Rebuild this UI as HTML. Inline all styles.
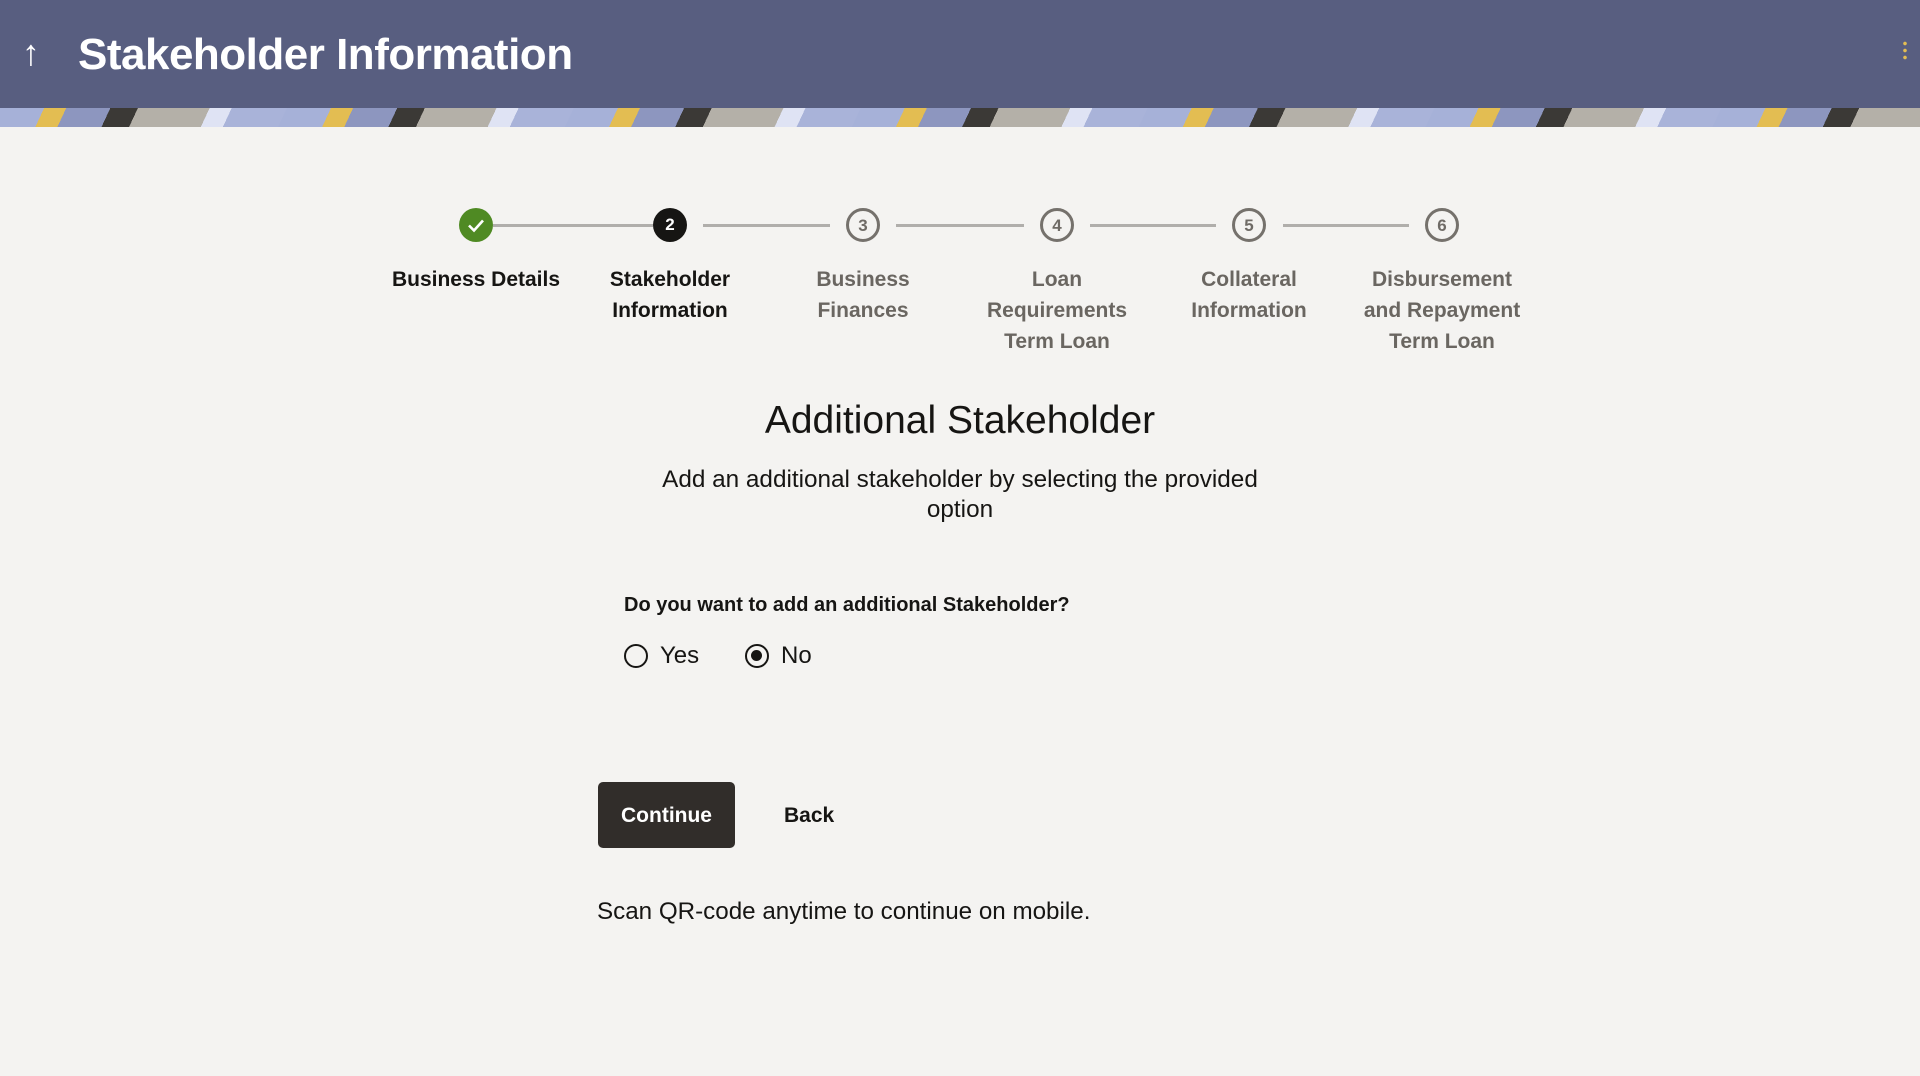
<!DOCTYPE html>
<html><head><meta charset="utf-8"><style>
*{margin:0;padding:0;box-sizing:border-box}
body{width:1920px;height:1076px;background:#f4f3f1;font-family:"Liberation Sans",sans-serif;position:relative;overflow:hidden;color:#161513}
.hdr{position:absolute;left:0;top:0;width:1920px;height:108px;background:#585e80}
.band{position:absolute;left:0;top:108px;width:1920px;height:19px;background:repeating-linear-gradient(115deg,#a6b1d8 0 40px,#e3bd52 40px 60px,#8d96bf 60px 100px,#3b3936 100px 125px,#b4b0a8 125px 190px,#dfe3f4 190px 210px,#a9b3d9 210px 260px)}
.ab{position:absolute;white-space:nowrap}
.title{left:78px;top:30px;font-size:44px;font-weight:bold;color:#fff;letter-spacing:-0.5px}
.line{position:absolute;top:224px;height:3px;background:#b0aeab}
.c{position:absolute;top:208px;width:34px;height:34px;border-radius:50%;text-align:center;line-height:30px;font-size:17px;font-weight:bold}
.c.o{border:3px solid #75716c;color:#6f6b66;background:#f4f3f1}
.lbl{position:absolute;top:264px;width:180px;margin-left:-90px;text-align:center;font-size:21px;font-weight:bold;line-height:31px;color:#6a6661}
</style></head><body>
<div class="hdr"></div>
<div class="band"></div>
<div class="ab" style="left:22px;top:32px;color:#fff;font-size:36px">↑</div>
<div class="ab title">Stakeholder Information</div>
<div class="ab" style="left:1903px;top:40px;width:4px;height:22px;background:radial-gradient(circle,#e3bd52 1.6px,transparent 2px) 0 0/4px 7px"></div>

<div class="line" style="left:493px;width:160px"></div>
<div class="line" style="left:703px;width:127px"></div>
<div class="line" style="left:896px;width:128px"></div>
<div class="line" style="left:1090px;width:126px"></div>
<div class="line" style="left:1283px;width:126px"></div>

<div class="c" style="left:459px;background:#4f8a23;color:#fff"><svg width="34" height="34" viewBox="0 0 34 34" style="display:block"><path d="M10 17.5l5 5 9-10" stroke="#fff" stroke-width="2.6" fill="none"/></svg></div>
<div class="c" style="left:653px;background:#161513;color:#fff;line-height:34px">2</div>
<div class="c o" style="left:846px">3</div>
<div class="c o" style="left:1040px">4</div>
<div class="c o" style="left:1232px">5</div>
<div class="c o" style="left:1425px">6</div>

<div class="lbl" style="left:476px;color:#161513">Business Details</div>
<div class="lbl" style="left:670px;color:#161513">Stakeholder<br>Information</div>
<div class="lbl" style="left:863px">Business<br>Finances</div>
<div class="lbl" style="left:1057px">Loan<br>Requirements<br>Term Loan</div>
<div class="lbl" style="left:1249px">Collateral<br>Information</div>
<div class="lbl" style="left:1442px">Disbursement<br>and Repayment<br>Term Loan</div>

<div class="ab" style="left:0;width:1920px;text-align:center;top:399px;font-size:39px">Additional Stakeholder</div>
<div class="ab" style="left:0;width:1920px;text-align:center;top:465px;font-size:24.3px;line-height:30px">Add an additional stakeholder by selecting the provided<br>option</div>
<div class="ab" style="left:624px;top:594px;font-size:20px;font-weight:bold">Do you want to add an additional Stakeholder?</div>
<div class="ab" style="left:624px;top:644px;width:24px;height:24px;border:2.5px solid #161513;border-radius:50%"></div>
<div class="ab" style="left:660px;top:642px;font-size:24px">Yes</div>
<div class="ab" style="left:745px;top:644px;width:24px;height:24px;border:2.5px solid #161513;border-radius:50%"><div style="margin:4px;width:11px;height:11px;border-radius:50%;background:#161513"></div></div>
<div class="ab" style="left:781px;top:642px;font-size:24px">No</div>
<div class="ab" style="left:598px;top:782px;width:137px;height:66px;background:#312d2a;border-radius:5px;color:#fff;font-size:21px;font-weight:bold;text-align:center;line-height:68px">Continue</div>
<div class="ab" style="left:784px;top:804px;font-size:21px;font-weight:bold">Back</div>
<div class="ab" style="left:597px;top:898px;font-size:24.2px">Scan QR-code anytime to continue on mobile.</div>
</body></html>
